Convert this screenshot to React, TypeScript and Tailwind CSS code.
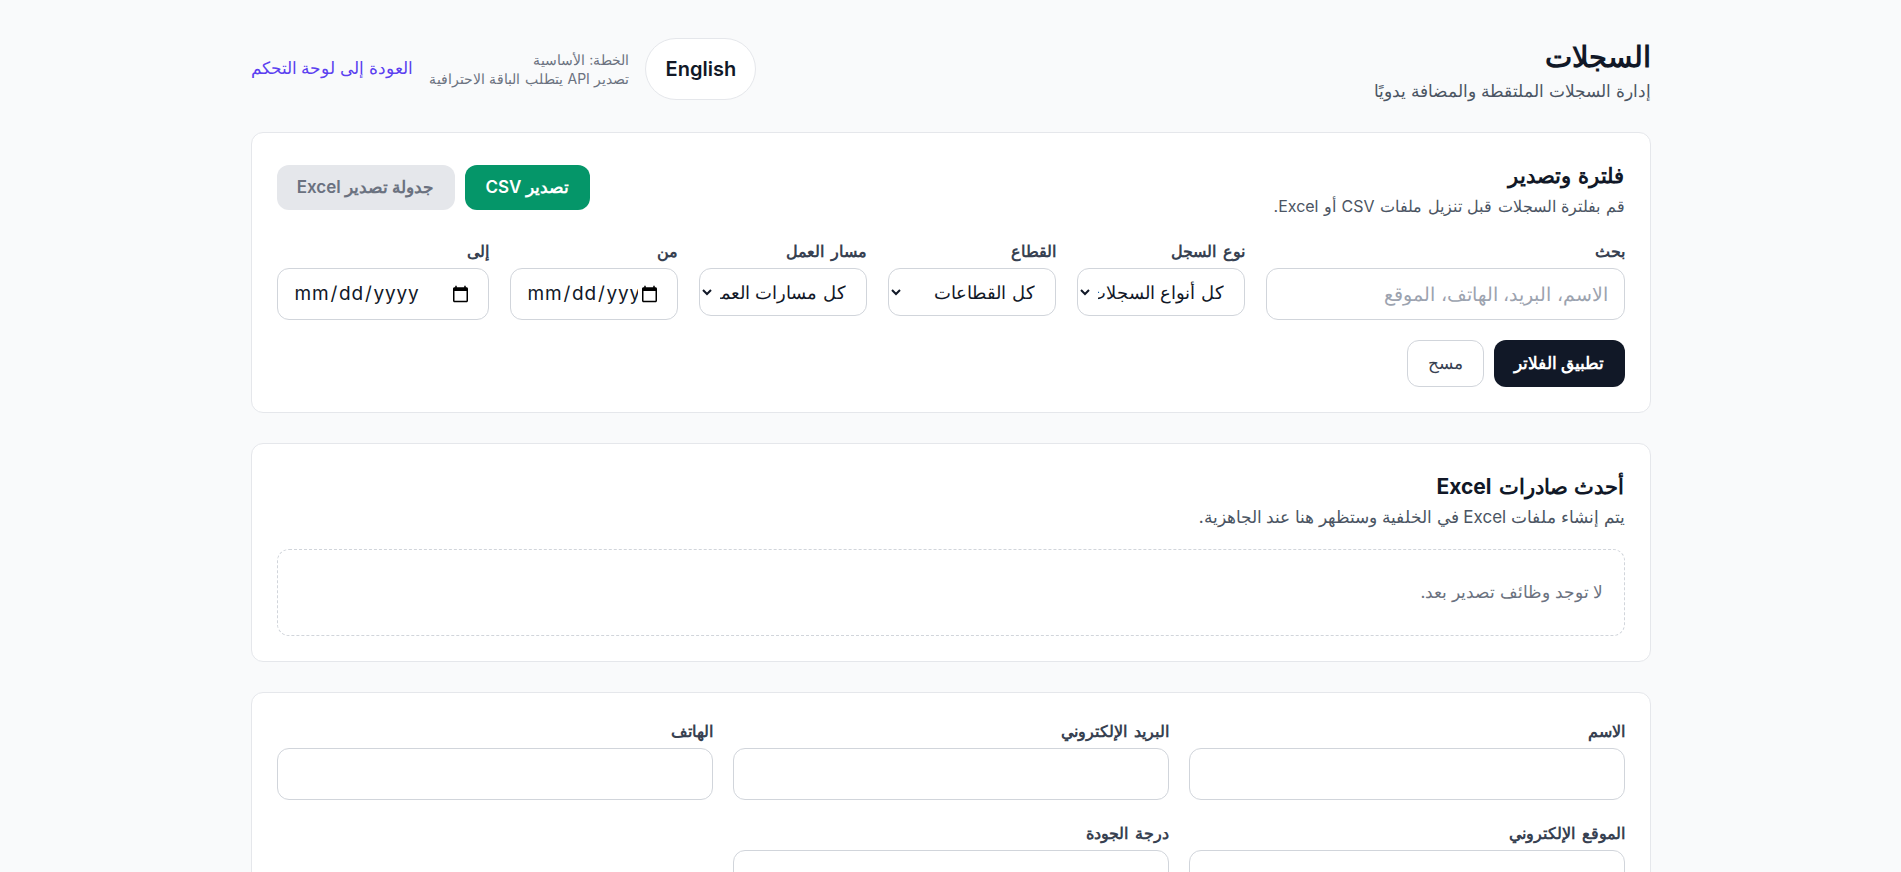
const inputCls =
  'h-[52px] w-full rounded-xl border border-[#d1d5db] bg-white px-4 text-[19px] text-[#111827] placeholder:text-[#9ca3af]';
const dateCls =
  'h-[52px] w-full rounded-xl border border-[#d1d5db] bg-white px-4 text-[19px] tracking-[0.8px] text-[#111827]';
const selectCls =
  'h-12 w-full rounded-xl border border-[#d1d5db] bg-white pl-1 pr-4 text-lg text-[#111827]';
const labelCls = 'mb-[5px] block text-base leading-6 font-semibold [word-spacing:2px] text-[#374151]';

const Field = ({ label, children }: { label: string; children: React.ReactNode }) => (
  <div>
    <label className={labelCls}>{label}</label>
    {children}
  </div>
);

export default function App() {
  return (
    <div
      dir="rtl"
      className="h-screen overflow-hidden bg-[#f9fafb] font-['Inter','Noto_Sans',sans-serif] text-[#111827]"
    >
      <div className="mx-auto max-w-[1400px] pt-[38px]">
        {/* Encabezado */}
        <div className="mb-[26px] flex items-start justify-between">
          <div>
            <h1 className="text-[28.5px] leading-[38px] font-bold">السجلات</h1>
            <p className="text-[17px] leading-[30px] text-[#4b5563]">إدارة السجلات الملتقطة والمضافة يدويًا</p>
          </div>
          <div className="flex items-center gap-4">
            <button className="h-[62px] w-[111px] rounded-full border border-[#e5e7eb] bg-white text-xl font-semibold">
              English
            </button>
            <div className="text-sm leading-[19px] [word-spacing:0.6px] text-[#6b7280]">
              <p>الخطة: الأساسية</p>
              <p>تصدير API يتطلب الباقة الاحترافية</p>
            </div>
            <a className="text-[17px] text-[#5b3ff0]">العودة إلى لوحة التحكم</a>
          </div>
        </div>

        <div className="space-y-[30px]">
          {/* Filtro */}
          <section className="rounded-xl border border-[#e5e7eb] bg-white p-[25px]">
            <div className="mb-5 flex items-center justify-between">
              <div>
                <h2 className="text-[21px] leading-9 font-semibold [word-spacing:2px]">فلترة وتصدير</h2>
                <p className="text-base leading-[25px] [word-spacing:1px] text-[#4b5563]">قم بفلترة السجلات قبل تنزيل ملفات CSV أو Excel.</p>
              </div>
              <div className="mb-[2px] flex gap-[10px]">
                <button className="h-[45px] w-[125px] rounded-xl bg-[#059669] text-[17px] font-semibold text-white">
                  تصدير CSV
                </button>
                <button className="h-[45px] w-[178px] rounded-xl bg-[#e5e7eb] text-[17px] font-semibold text-[#6b7280]">
                  جدولة تصدير Excel
                </button>
              </div>
            </div>
            <div className="grid grid-cols-[359px_168px_168px_168px_168px_212px] gap-[21px]">
              <Field label="بحث">
                <input className={inputCls} placeholder="الاسم، البريد، الهاتف، الموقع" />
              </Field>
              <Field label="نوع السجل">
                <select className={selectCls}>
                  <option>كل أنواع السجلات</option>
                </select>
              </Field>
              <Field label="القطاع">
                <select className={selectCls}>
                  <option>كل القطاعات</option>
                </select>
              </Field>
              <Field label="مسار العمل">
                <select className={selectCls}>
                  <option>كل مسارات العمل</option>
                </select>
              </Field>
              <Field label="من">
                <input type="date" className={dateCls} />
              </Field>
              <Field label="إلى">
                <input type="date" className={dateCls} />
              </Field>
            </div>
            <div className="mt-5 flex gap-[10px]">
              <button className="h-[47px] rounded-xl bg-[#111827] px-5 text-[17px] font-semibold text-white">
                تطبيق الفلاتر
              </button>
              <button className="h-[47px] rounded-xl border border-[#d1d5db] bg-white px-5 text-[17px] font-medium text-[#374151]">
                مسح
              </button>
            </div>
          </section>

          {/* Exportaciones */}
          <section className="rounded-xl border border-[#e5e7eb] bg-white p-[25px]">
            <h2 className="text-[21px] leading-[35px] font-bold [word-spacing:2px]">أحدث صادرات Excel</h2>
            <p className="text-[17px] leading-[26px] text-[#4b5563]">يتم إنشاء ملفات Excel في الخلفية وستظهر هنا عند الجاهزية.</p>
            <div className="mt-[19px] flex h-[87px] items-center rounded-xl border border-dashed border-[#d1d5db] px-5 text-[17px] text-[#6b7280]">
              لا توجد وظائف تصدير بعد.
            </div>
          </section>

          {/* Formulario */}
          <section className="rounded-xl border border-[#e5e7eb] bg-white p-[25px]">
            <div className="mt-[1px] grid grid-cols-3 gap-x-5 gap-y-[21px]">
              <Field label="الاسم">
                <input className={inputCls} />
              </Field>
              <Field label="البريد الإلكتروني">
                <input className={inputCls} />
              </Field>
              <Field label="الهاتف">
                <input className={inputCls} />
              </Field>
              <Field label="الموقع الإلكتروني">
                <input className={inputCls} />
              </Field>
              <Field label="درجة الجودة">
                <input className={inputCls} />
              </Field>
            </div>
          </section>
        </div>
      </div>
    </div>
  );
}
